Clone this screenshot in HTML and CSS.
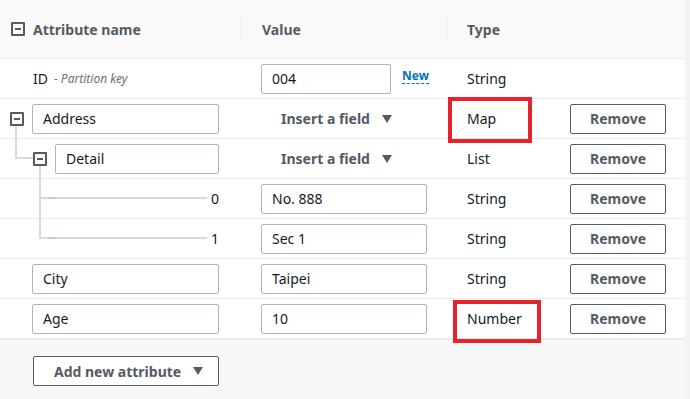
FILE: index.html
```html
<!DOCTYPE html>
<html lang="en">
<head>
    <meta charset="UTF-8">
    <title>Edit item</title>
    <link rel="stylesheet" href="styles.css">
</head>
<body>
    <div class="editor">
        <div class="row head">
            <div class="cell name"><span class="toggle"></span>Attribute name</div>
            <div class="cell value sep">Value</div>
            <div class="cell type sep">Type</div>
            <div class="cell actions"></div>
        </div>

        <div class="row">
            <div class="cell name"><span class="key">ID</span><span class="key-note">- Partition key</span></div>
            <div class="cell value"><input class="field short" value="004"><span class="new-tag">New</span></div>
            <div class="cell type">String</div>
            <div class="cell actions"></div>
        </div>

        <div class="row">
            <div class="cell name"><span class="toggle"></span><input class="field" value="Address"></div>
            <div class="cell value"><button class="insert-btn">Insert a field <span class="caret"></span></button></div>
            <div class="cell type">Map</div>
            <div class="cell actions"><button class="remove-btn">Remove</button></div>
        </div>

        <div class="row">
            <div class="cell name level-1"><span class="branch branch-map"></span><span class="toggle"></span><input class="field" value="Detail"></div>
            <div class="cell value"><button class="insert-btn">Insert a field <span class="caret"></span></button></div>
            <div class="cell type">List</div>
            <div class="cell actions"><button class="remove-btn">Remove</button></div>
        </div>

        <div class="row">
            <div class="cell name index"><span class="branch branch-first"></span>0</div>
            <div class="cell value"><input class="field" value="No. 888"></div>
            <div class="cell type">String</div>
            <div class="cell actions"><button class="remove-btn">Remove</button></div>
        </div>

        <div class="row">
            <div class="cell name index"><span class="branch branch-next"></span>1</div>
            <div class="cell value"><input class="field" value="Sec 1"></div>
            <div class="cell type">String</div>
            <div class="cell actions"><button class="remove-btn">Remove</button></div>
        </div>

        <div class="row">
            <div class="cell name"><input class="field" value="City"></div>
            <div class="cell value"><input class="field" value="Taipei"></div>
            <div class="cell type">String</div>
            <div class="cell actions"><button class="remove-btn">Remove</button></div>
        </div>

        <div class="row last">
            <div class="cell name"><input class="field" value="Age"></div>
            <div class="cell value"><input class="field" value="10"></div>
            <div class="cell type">Number</div>
            <div class="cell actions"><button class="remove-btn">Remove</button></div>
        </div>

        <div class="foot">
            <button class="add-btn">Add new attribute <span class="caret"></span></button>
        </div>

        <!-- annotation boxes drawn over the screenshot -->
        <div class="mark mark-map"></div>
        <div class="mark mark-number"></div>
    </div>
</body>
</html>
```

FILE: styles.css
```css
body {
    margin: 0;
    background-color: #f2f3f3;
    font-family: 'Noto Sans', 'Open Sans', sans-serif;
    font-size: 14px;
    color: #16191f;
}
.editor {
    position: relative;
    width: 685px;
    height: 399px;
    background-color: #fff;
}
.row {
    display: grid;
    grid-template-columns: 241px 205px 104px 135px;
    height: 39px;
    border-bottom: 1px solid #eaeded;
}
.row.head {
    height: 58px;
    background-color: #fafafa;
    font-weight: bold;
    color: #545b64;
}
.row.last {
    border-bottom: 2px solid #eaeded;
}
.cell {
    position: relative;
    display: flex;
    align-items: center;
    box-sizing: border-box;
}
.cell.name {
    padding-left: 32px;
}
.head .cell.name {
    padding-left: 11px;
}
.cell.value {
    padding-left: 20px;
}
.cell.type {
    padding-left: 21px;
}
.cell.actions {
    padding-left: 20px;
}
.head .sep {
    padding-left: 21px;
}
.head .sep::before {
    content: "";
    position: absolute;
    left: 0;
    top: 15px;
    bottom: 15px;
    border-left: 1px solid #eaeded;
}
/* expand / collapse square */
.toggle {
    position: relative;
    width: 10px;
    height: 10px;
    border: 2px solid #545b64;
    border-radius: 1px;
    background-color: #fff;
    flex-shrink: 0;
    margin-right: 8px;
}
.toggle::after {
    content: "";
    position: absolute;
    left: 2px;
    right: 2px;
    top: 4px;
    height: 2px;
    background-color: #545b64;
}
.row:not(.head) .cell.name > .toggle:first-child {
    margin-left: -22px;
}
.level-1 {
    padding-left: 55px !important;
}
.level-1 .toggle {
    margin-left: -22px;
}
.key {
    margin-left: 1px;
}
.key-note {
    margin-left: 6px;
    font-size: 12px;
    font-style: italic;
    color: #687078;
}
.field {
    box-sizing: border-box;
    width: 187px;
    height: 30px;
    padding: 0 10px;
    border: 1px solid #aab7b8;
    border-radius: 2px;
    font-family: inherit;
    font-size: 14px;
    color: #16191f;
    background-color: #fff;
}
.level-1 .field {
    width: 164px;
}
.cell.value .field {
    width: 166px;
}
.cell.value .field.short {
    width: 130px;
}
.new-tag {
    margin-left: 11px;
    margin-top: -6px;
    font-size: 12px;
    font-weight: bold;
    color: #0073bb;
    border-bottom: 1px dashed #0073bb;
    line-height: 15px;
}
.insert-btn,
.add-btn,
.remove-btn {
    font-family: inherit;
    font-size: 14px;
    font-weight: bold;
    color: #545b64;
    background-color: #fff;
    cursor: pointer;
}
.insert-btn {
    display: flex;
    align-items: center;
    padding: 0 0 0 20px;
    border: none;
    background: none;
}
.caret {
    display: inline-block;
    width: 0;
    height: 0;
    margin-left: 12px;
    border-left: 5px solid transparent;
    border-right: 5px solid transparent;
    border-top: 8px solid #545b64;
}
.remove-btn {
    box-sizing: border-box;
    width: 96px;
    height: 30px;
    border: 1px solid #545b64;
    border-radius: 2px;
}
/* tree connectors */
.index {
    justify-content: flex-end;
    padding-right: 22px;
}
.branch {
    position: absolute;
    box-sizing: border-box;
    border-left: 2px solid #d5dbdb;
    border-bottom: 2px solid #d5dbdb;
}
.branch-map {
    left: 15px;
    top: -13px;
    width: 18px;
    height: 33px;
}
.branch-first {
    left: 39px;
    top: -13px;
    width: 168px;
    height: 33px;
}
.branch-next {
    left: 39px;
    top: -21px;
    width: 168px;
    height: 41px;
}
.branch-first::after,
.branch-next::after {
    content: "";
    position: absolute;
    left: 7px;
    bottom: -2px;
    width: 7px;
    height: 2px;
    background-color: #c4cccc;
}
.foot {
    height: 60px;
    box-sizing: border-box;
    padding: 16px 0 0 33px;
    background-color: #f8f8f8;
}
.add-btn {
    box-sizing: border-box;
    display: flex;
    align-items: center;
    width: 186px;
    height: 30px;
    padding: 0 0 0 20px;
    border: 1px solid #545b64;
    border-radius: 2px;
}
/* red annotation boxes */
.mark {
    position: absolute;
    box-sizing: border-box;
    border: 4px solid #e8212a;
}
.mark-map {
    left: 448px;
    top: 97px;
    width: 84px;
    height: 46px;
}
.mark-number {
    left: 453px;
    top: 300px;
    width: 88px;
    height: 43px;
}
```
